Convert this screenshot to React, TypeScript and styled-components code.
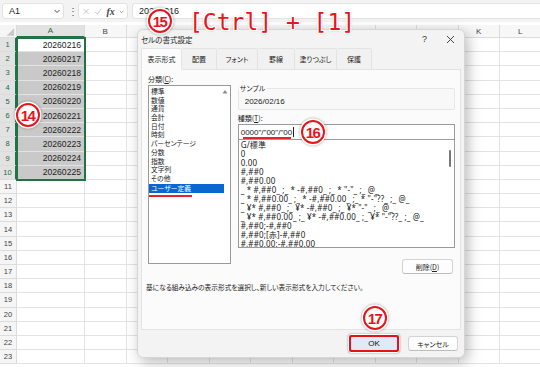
import React from 'react';
import styled, { createGlobalStyle } from 'styled-components';

const GlobalStyle = createGlobalStyle`
  html, body { margin: 0; padding: 0; }
  body {
    width: 540px;
    height: 367px;
    overflow: hidden;
    background: #fff;
    font-family: "Noto Sans CJK JP", "Noto Sans", sans-serif;
  }
`;

const COLS = ['A', 'B', 'C', 'D', 'E', 'F', 'G', 'H', 'I', 'J', 'K', 'L'];
const ROW_COUNT = 23;
const VALUES = [
  '20260216', '20260217', '20260218', '20260219', '20260220',
  '20260221', '20260222', '20260223', '20260224', '20260225',
];

const CATEGORIES = [
  '標準', '数値', '通貨', '会計', '日付', '時刻', 'パーセンテージ',
  '分数', '指数', '文字列', 'その他', 'ユーザー定義',
];

const FORMATS = [
  'G/標準',
  '0',
  '0.00',
  '#,##0',
  '#,##0.00',
  '_ * #,##0_ ;_ * -#,##0_ ;_ * "-"_ ;_ @_',
  '_ * #,##0.00_ ;_ * -#,##0.00_ ;_ * "-"??_ ;_ @_',
  '_ ¥* #,##0_ ;_ ¥* -#,##0_ ;_ ¥* "-"_ ;_ @_',
  '_ ¥* #,##0.00_ ;_ ¥* -#,##0.00_ ;_ ¥* "-"??_ ;_ @_',
  '#,##0;-#,##0',
  '#,##0;[赤]-#,##0',
  '#,##0.00;-#,##0.00',
];

const TABS = [
  { label: '表示形式', width: 41 },
  { label: '配置', width: 35 },
  { label: 'フォント', width: 41 },
  { label: '罫線', width: 37 },
  { label: '塗りつぶし', width: 42 },
  { label: '保護', width: 35 },
];

function FormulaBarRow() {
  return (
    <FormulaBar>
      <NameBox>
        A1
        <svg width="8" height="8" viewBox="0 0 8 8">
          <path d="M1.5 3 L4 5.5 L6.5 3" fill="none" stroke="#444" strokeWidth="1" />
        </svg>
      </NameBox>
      <Dots>⋮</Dots>
      <FxBox>
        <svg width="11" height="11" viewBox="0 0 11 11">
          <path d="M2 2 L9 9 M9 2 L2 9" stroke="#b5b5b5" strokeWidth="1" />
        </svg>
        <svg width="11" height="11" viewBox="0 0 11 11">
          <path d="M1.5 6 L4.5 9 L9.5 2" fill="none" stroke="#b5b5b5" strokeWidth="1" />
        </svg>
        <FxLabel>fx</FxLabel>
        <svg width="7" height="7" viewBox="0 0 7 7">
          <path d="M1 2.5 L3.5 5 L6 2.5" fill="none" stroke="#777" strokeWidth="0.9" />
        </svg>
      </FxBox>
      <FormulaInput>20260216</FormulaInput>
    </FormulaBar>
  );
}

function Sheet() {
  const rows = Array.from({ length: ROW_COUNT }, (_, i) => i + 1);
  return (
    <GridWrap>
      <Grid>
        <Corner>
          <svg width="17" height="13" viewBox="0 0 17 13">
            <path d="M15 3 L15 11 L7 11 Z" fill="#c8c8c8" />
          </svg>
        </Corner>
        {COLS.map((c) => (
          <ColHeader key={c} $active={c === 'A'}>{c}</ColHeader>
        ))}
        {rows.map((r) => (
          <React.Fragment key={r}>
            <RowHeader $active={r <= 10}>{r}</RowHeader>
            {COLS.map((c) => (
              <Cell key={c} $selected={c === 'A' && r >= 2 && r <= 10}>
                {c === 'A' && r <= 10 ? VALUES[r - 1] : ''}
              </Cell>
            ))}
          </React.Fragment>
        ))}
      </Grid>
      <Selection />
    </GridWrap>
  );
}

function FormatDialog() {
  return (
    <Dialog>
      <TitleBar>
        <Title>セルの書式設定</Title>
        <TitleButtons>
          <span>?</span>
          <svg width="9" height="9" viewBox="0 0 9 9">
            <path d="M1 1 L8 8 M8 1 L1 8" stroke="#333" strokeWidth="0.9" />
          </svg>
        </TitleButtons>
      </TitleBar>
      <Tabs>
        {TABS.map((t, i) => (
          <Tab key={t.label} $active={i === 0} style={{ width: t.width }}>
            {t.label}
          </Tab>
        ))}
      </Tabs>
      <Panel>
        <Columns>
          <LeftCol>
            <Label>分類(<u>C</u>):</Label>
            <CategoryList>
              {CATEGORIES.map((c, i) =>
                i === CATEGORIES.length - 1 ? (
                  <CategoryItem key={c} $selected>
                    <Marked>{c}</Marked>
                  </CategoryItem>
                ) : (
                  <CategoryItem key={c}>{c}</CategoryItem>
                ),
              )}
              <ScrollUp>
                <svg width="6" height="5" viewBox="0 0 6 5">
                  <path d="M0.5 4.5 L3 1 L5.5 4.5 Z" fill="#8a8a8a" />
                </svg>
              </ScrollUp>
            </CategoryList>
          </LeftCol>
          <RightCol>
            <Group>
              <Legend>サンプル</Legend>
              <SampleValue>2026/02/16</SampleValue>
            </Group>
            <TypeLabel>種類(<u>T</u>):</TypeLabel>
            <TypeInput>
              <TypeText>0000"/"00"/"00</TypeText>
              <Caret />
            </TypeInput>
            <FormatList>
              {FORMATS.map((f) => (
                <FormatItem key={f}>{f}</FormatItem>
              ))}
              <ScrollThumb />
            </FormatList>
            <DeleteRow>
              <SmallButton>削除(<u>D</u>)</SmallButton>
            </DeleteRow>
          </RightCol>
        </Columns>
        <Description>基になる組み込みの表示形式を選択し、新しい表示形式を入力してください。</Description>
      </Panel>
      <Footer>
        <OkFrame>
          <OkButton>OK</OkButton>
        </OkFrame>
        <CancelButton>キャンセル</CancelButton>
      </Footer>
    </Dialog>
  );
}

export default function App() {
  return (
    <Page>
      <GlobalStyle />
      <FormulaBarRow />
      <Sheet />
      <FormatDialog />
      <Hotkey>[Ctrl] + [1]</Hotkey>
      <Badge $x={28} $y={115}>14</Badge>
      <Badge $x={160} $y={21}>15</Badge>
      <Badge $x={313} $y={132}>16</Badge>
      <Badge $x={375} $y={318}>17</Badge>
    </Page>
  );
}

const Page = styled.div`
  position: relative;
  width: 540px;
  height: 367px;
  overflow: hidden;
  background: #fff;
`;

const FormulaBar = styled.div`
  display: flex;
  align-items: center;
  gap: 4px;
  height: 22px;
  padding: 0 0 0 2px;
  margin-bottom: 3px;
  background: #f3f3f3;
  font-family: "Liberation Sans", "Noto Sans CJK JP", sans-serif;
  font-size: 9px;
  color: #222;
`;

const NameBox = styled.div`
  display: flex;
  align-items: center;
  justify-content: space-between;
  box-sizing: border-box;
  width: 62px;
  height: 16px;
  padding: 0 2px 0 6px;
  background: #fff;
  border: 1px solid #e2e2e2;
  border-radius: 3px;
`;

const Dots = styled.div`
  width: 6px;
  color: #555;
  font-size: 10px;
  text-align: center;
`;

const FxBox = styled.div`
  display: flex;
  align-items: center;
  gap: 4px;
  box-sizing: border-box;
  height: 16px;
  width: 50px;
  padding: 0 3px;
  background: #fff;
  border: 1px solid #e2e2e2;
  border-radius: 3px;
`;

const FxLabel = styled.span`
  font-family: "Liberation Serif", serif;
  font-style: italic;
  font-weight: bold;
  font-size: 10px;
  color: #444;
`;

const FormulaInput = styled.div`
  flex: 1;
  display: flex;
  align-items: center;
  box-sizing: border-box;
  height: 16px;
  padding-left: 6px;
  background: #fff;
  border: 1px solid #e2e2e2;
  border-right: none;
  border-radius: 3px 0 0 3px;
`;

const GridWrap = styled.div`
  position: relative;
`;

const Grid = styled.div`
  display: grid;
  grid-template-columns: 17px 68px repeat(11, 41.5px);
  grid-template-rows: 13px repeat(${ROW_COUNT}, 14.2px);
  font-family: "Liberation Sans", sans-serif;
`;

const Corner = styled.div`
  background: #f5f5f5;
  border-right: 1px solid #dcdcdc;
  border-bottom: 1px solid #dcdcdc;
  box-sizing: border-box;
  display: flex;
`;

const ColHeader = styled.div<{ $active?: boolean }>`
  box-sizing: border-box;
  display: flex;
  align-items: center;
  justify-content: center;
  font-size: 8px;
  color: ${(p) => (p.$active ? '#1d6b41' : '#444')};
  background: ${(p) => (p.$active ? '#e2e2e2' : '#f7f7f7')};
  border-right: 1px solid #dcdcdc;
  border-bottom: ${(p) => (p.$active ? '2px solid #217346' : '1px solid #dcdcdc')};
`;

const RowHeader = styled.div<{ $active?: boolean }>`
  box-sizing: border-box;
  display: flex;
  align-items: center;
  justify-content: center;
  font-size: 7.5px;
  color: ${(p) => (p.$active ? '#1d6b41' : '#444')};
  background: ${(p) => (p.$active ? '#e2e2e2' : '#f5f5f5')};
  border-right: ${(p) => (p.$active ? '2px solid #217346' : '1px solid #dcdcdc')};
  border-bottom: 1px solid #dcdcdc;
`;

const Cell = styled.div<{ $selected?: boolean }>`
  box-sizing: border-box;
  display: flex;
  align-items: center;
  justify-content: flex-end;
  padding-right: 3px;
  font-size: 8.6px;
  color: #222;
  background: ${(p) => (p.$selected ? '#c9c9c9' : '#fff')};
  border-right: 1px solid #e3e3e3;
  border-bottom: 1px solid #e3e3e3;
`;

const Selection = styled.div`
  position: absolute;
  left: 16px;
  top: 12px;
  width: 70px;
  height: 144px;
  box-sizing: border-box;
  border: 2px solid #217346;
  pointer-events: none;
`;

const Dialog = styled.div`
  position: absolute;
  left: 137px;
  top: 29px;
  width: 328px;
  height: 329px;
  box-sizing: border-box;
  display: flex;
  flex-direction: column;
  background: #f3f3f3;
  border: 1px solid #d6d6d6;
  border-radius: 6px;
  box-shadow: 3px 4px 14px rgba(0, 0, 0, 0.28);
  font-size: 8px;
  color: #222;
  font-feature-settings: "palt";
`;

const TitleBar = styled.div`
  display: flex;
  align-items: center;
  justify-content: space-between;
  height: 18px;
  padding: 0 9px 0 3px;
`;

const Title = styled.div`
  font-size: 7.5px;
`;

const TitleButtons = styled.div`
  display: flex;
  align-items: center;
  gap: 19px;
  font-family: "Liberation Sans", sans-serif;
  font-size: 9px;
  color: #333;
`;

const Tabs = styled.div`
  display: flex;
  height: 21px;
  padding-left: 3px;
`;

const Tab = styled.div<{ $active?: boolean }>`
  box-sizing: border-box;
  display: flex;
  align-items: center;
  justify-content: center;
  font-size: 7px;
  background: ${(p) => (p.$active ? '#fbfbfb' : '#f1f1f1')};
  border: 1px solid #e3e3e3;
  border-bottom: ${(p) => (p.$active ? '1px solid #fbfbfb' : '1px solid #e3e3e3')};
  border-left-width: ${(p) => (p.$active ? '1px' : '0')};
  border-radius: 2px 2px 0 0;
  margin-bottom: -1px;
  position: relative;
  z-index: ${(p) => (p.$active ? 1 : 0)};
`;

const Panel = styled.div`
  flex: 1;
  margin: 0 3px;
  padding: 4px 5px 0 9px;
  background: #fbfbfb;
  border: 1px solid #e3e3e3;
  display: flex;
  flex-direction: column;
`;

const Columns = styled.div`
  display: flex;
  gap: 7px;
`;

const LeftCol = styled.div`
  width: 83px;
  display: flex;
  flex-direction: column;
  margin-left: -3px;
`;

const RightCol = styled.div`
  width: 218px;
  display: flex;
  flex-direction: column;
  padding-top: 10px;
`;

const Label = styled.div`
  height: 10px;
  line-height: 10px;
  font-size: 7px;
  margin-bottom: 1px;
  u { text-decoration-thickness: 0.6px; }
`;

const TypeLabel = styled(Label)`
  margin-top: 3px;
`;

const CategoryList = styled.div`
  position: relative;
  box-sizing: border-box;
  height: 179px;
  padding: 1px 0 0 0;
  background: #fff;
  border: 1px solid #9a9a9a;
`;

const CategoryItem = styled.div<{ $selected?: boolean }>`
  height: 8.7px;
  line-height: 8.7px;
  width: 73px;
  padding-left: 2px;
  font-size: 6.8px;
  color: ${(p) => (p.$selected ? '#fff' : '#222')};
  background: ${(p) => (p.$selected ? '#0b67d0' : 'transparent')};
  white-space: nowrap;
  ${(p) => (p.$selected ? 'margin-top: 1px; height: 9.5px; line-height: 9.5px;' : '')}
`;

const Marked = styled.span`
  position: relative;
  &::after {
    content: '';
    position: absolute;
    left: -2px;
    right: -1px;
    bottom: -4px;
    height: 1.5px;
    background: #e0262a;
  }
`;

const ScrollUp = styled.div`
  position: absolute;
  right: 2px;
  top: 3px;
  display: flex;
`;

const Group = styled.fieldset`
  margin: 0;
  padding: 4px 6px 0 6px;
  height: 26px;
  box-sizing: border-box;
  border: 1px solid #e6e6e6;
  border-radius: 2px;
  background: #f8f8f8;
`;

const Legend = styled.legend`
  padding: 0 1px;
  margin-left: -6px;
  font-size: 7px;
  line-height: 8px;
  background: #fbfbfb;
`;

const SampleValue = styled.div`
  font-family: "Liberation Sans", sans-serif;
  font-size: 8px;
  line-height: 12px;
`;

const TypeInput = styled.div`
  display: flex;
  align-items: center;
  box-sizing: border-box;
  height: 15px;
  padding-left: 2px;
  background: #fff;
  border: 1px solid #9a9a9a;
  border-bottom: none;
`;

const TypeText = styled.span`
  font-family: "Liberation Sans", sans-serif;
  font-size: 8px;
  box-shadow: 0 4px 0 -2px #e0262a;
  padding-right: 1px;
`;

const Caret = styled.span`
  width: 1px;
  height: 10px;
  background: #222;
`;

const FormatList = styled.div`
  position: relative;
  box-sizing: border-box;
  height: 109px;
  padding: 0 0 0 2px;
  background: #fff;
  border: 1px solid #9a9a9a;
  overflow: hidden;
`;

const FormatItem = styled.div`
  height: 9px;
  line-height: 9px;
  font-family: "Noto Sans", "Noto Sans CJK JP", sans-serif;
  font-size: 8px;
  letter-spacing: 0.15px;
  white-space: nowrap;
`;

const ScrollThumb = styled.div`
  position: absolute;
  right: 3px;
  top: 10px;
  width: 2px;
  height: 17px;
  background: #777;
  border-radius: 1px;
`;

const DeleteRow = styled.div`
  display: flex;
  justify-content: flex-end;
  margin-top: 11px;
  padding-right: 2px;
`;

const SmallButton = styled.div`
  box-sizing: border-box;
  width: 51px;
  height: 15px;
  display: flex;
  align-items: center;
  justify-content: center;
  font-size: 7px;
  background: #fdfdfd;
  border: 1px solid #d3d3d3;
  border-bottom-color: #bdbdbd;
  border-radius: 3px;
`;

const Description = styled.div`
  margin: 9px 0 0 -5px;
  font-size: 6.7px;
  line-height: 9px;
  white-space: nowrap;
`;

const Footer = styled.div`
  height: 27px;
  display: flex;
  align-items: center;
  justify-content: flex-end;
  gap: 8px;
  padding-right: 6px;
`;

const OkFrame = styled.div`
  box-sizing: border-box;
  width: 52px;
  height: 19px;
  padding: 2px;
  border: 1px solid #fff;
  background: #e8101a;
  border-radius: 3px;
  box-shadow: 0 0 2px rgba(0, 0, 0, 0.4);
`;

const OkButton = styled.div`
  height: 100%;
  display: flex;
  align-items: center;
  justify-content: center;
  background: #dfeaf5;
  border-radius: 1px;
  font-family: "Liberation Sans", sans-serif;
  font-size: 8px;
  color: #111;
`;

const CancelButton = styled.div`
  box-sizing: border-box;
  width: 50px;
  height: 15px;
  display: flex;
  align-items: center;
  justify-content: center;
  font-size: 7px;
  background: #fdfdfd;
  border: 1px solid #d3d3d3;
  border-bottom-color: #bdbdbd;
  border-radius: 3px;
`;

const Hotkey = styled.div`
  position: absolute;
  left: 189px;
  top: 10px;
  font-family: "DejaVu Sans Mono", monospace;
  font-size: 23px;
  line-height: 24px;
  color: #e8141b;
  white-space: pre;
  text-shadow:
    1px 0 0 #fff, -1px 0 0 #fff, 0 1px 0 #fff, 0 -1px 0 #fff,
    1px 1px 0 #fff, -1px -1px 0 #fff, 1px -1px 0 #fff, -1px 1px 0 #fff,
    0 0 3px rgba(0, 0, 0, 0.35);
`;

const Badge = styled.div<{ $x: number; $y: number }>`
  position: absolute;
  left: ${(p) => p.$x - 12}px;
  top: ${(p) => p.$y - 12}px;
  width: 24px;
  height: 24px;
  box-sizing: border-box;
  border-radius: 50%;
  border: 2px solid #e8141b;
  background: #fff;
  box-shadow: 0 0 0 1.5px #fff, 0 0 3px 1.5px rgba(0, 0, 0, 0.35);
  display: flex;
  align-items: center;
  justify-content: center;
  font-family: "Liberation Sans", sans-serif;
  font-weight: bold;
  font-size: 15px;
  letter-spacing: -1.5px;
  color: #e8141b;
  padding-right: 1px;
`;
